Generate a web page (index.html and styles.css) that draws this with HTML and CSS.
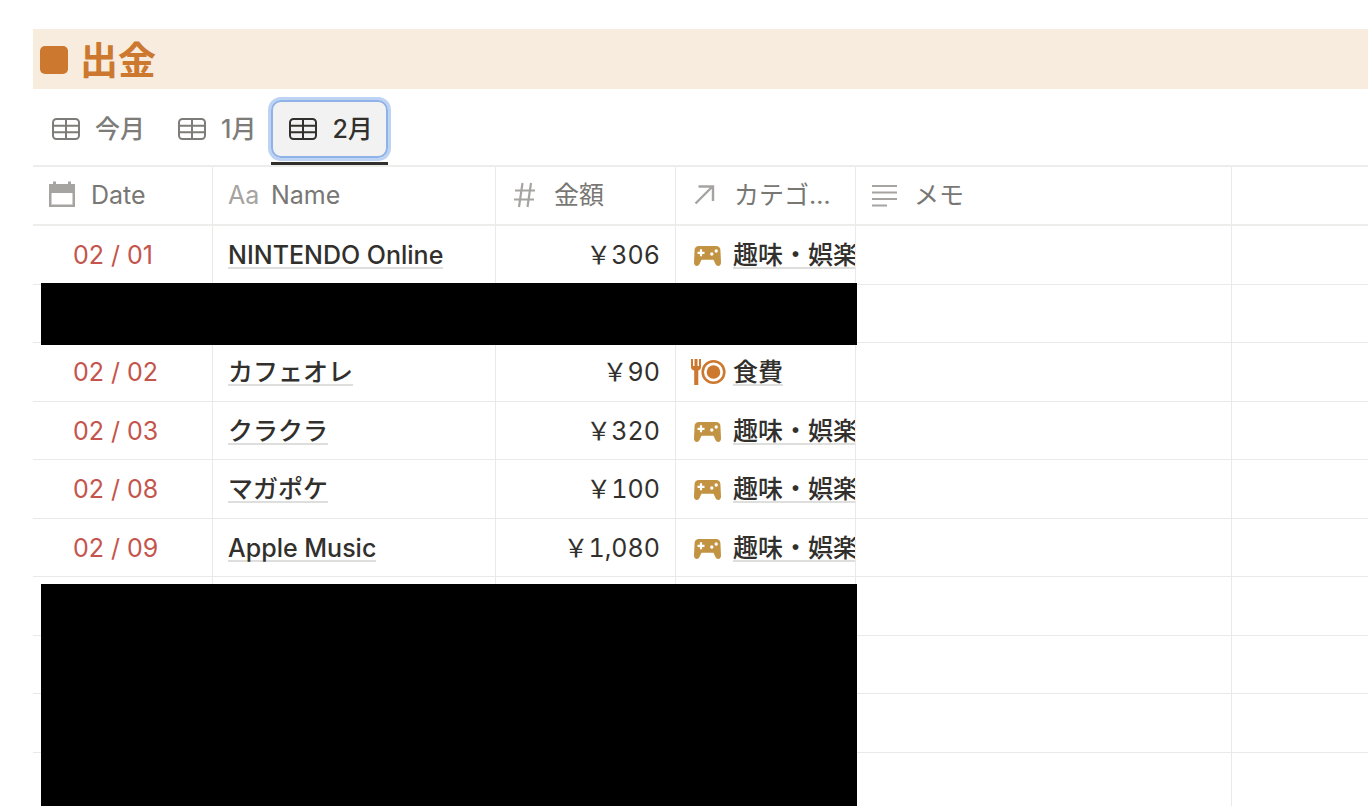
FILE: index.html
```html
<!DOCTYPE html>
<html lang="ja">
<head>
    <meta charset="UTF-8">
    <meta name="viewport" content="width=device-width, initial-scale=1.0">
    <title>出金</title>
    <link rel="stylesheet" href="styles.css">
</head>
<body>
  <!-- shared icons -->
  <svg class="sprite" aria-hidden="true">
    <symbol id="icon-table" viewBox="0 0 28 22">
      <rect x="1" y="1" width="26" height="20" rx="3.5" fill="none" stroke="currentColor" stroke-width="2"/>
      <path d="M1 7.7h26M1 14.3h26M14 1v20" fill="none" stroke="currentColor" stroke-width="2"/>
    </symbol>
    <symbol id="icon-game" viewBox="0 0 27 20">
      <path fill-rule="evenodd" d="M5 0h17c2.500 0 4.200 1.400 4.400 3.800l.6 12.400c.1 2.400-1 3.800-2.700 3.800-1.300 0-2.200-.7-2.800-2l-2-4.200h-12L5.500 18c-.6 1.300-1.500 2-2.800 2C1 20-.1 18.600 0 16.200L.6 3.800C.8 1.400 2.500 0 5 0zM5.900 3.300v2.400H3.500v2.200h2.400v2.400h2.200V7.900h2.400V5.700H8.100V3.300zM17.800 6.300a1.700 1.700 0 1 0 0 3.400 1.700 1.700 0 0 0 0-3.400zM22.200 3.300a1.700 1.700 0 1 0 0 3.400 1.700 1.700 0 0 0 0-3.400z" fill="currentColor"/>
    </symbol>
  </svg>

  <main class="database">
    <h1 class="title"><span class="title-mark"></span>出金</h1>

    <div class="tabs" role="tablist">
        <div class="tab-item">
            <button class="tab" role="tab" aria-selected="false"><svg class="tab-icon"><use href="#icon-table"/></svg>今月</button>
        </div>
        <div class="tab-item">
            <button class="tab" role="tab" aria-selected="false"><svg class="tab-icon"><use href="#icon-table"/></svg>1月</button>
        </div>
        <div class="tab-item active">
            <button class="tab" role="tab" aria-selected="true"><svg class="tab-icon"><use href="#icon-table"/></svg>2月</button>
        </div>
    </div>

    <div class="table-wrap">
      <table>
        <colgroup>
            <col class="col-date">
            <col class="col-name">
            <col class="col-amount">
            <col class="col-category">
            <col class="col-memo">
            <col>
        </colgroup>
        <thead>
          <tr>
            <th><div class="head">
                <svg class="head-icon" viewBox="0 0 28 28"><path fill-rule="evenodd" d="M1 3h4V.5h3V3h12V.5h3V3h4v23H1zM3.500 12v11.500h21V12z" fill="currentColor"/></svg>
                Date</div></th>
            <th><div class="head"><span class="head-aa">Aa</span>Name</div></th>
            <th><div class="head">
                <svg class="head-icon" viewBox="0 0 28 28"><path d="M11.500 2L8 26M20 2l-3.500 24M4 9.500h20M3 18.500h20" fill="none" stroke="currentColor" stroke-width="2.200"/></svg>
                金額</div></th>
            <th><div class="head">
                <svg class="head-icon" viewBox="0 0 28 28"><path d="M4.500 22.500L21.500 5.500M7.500 5.500H22v14.500" fill="none" stroke="currentColor" stroke-width="2.400"/></svg>
                <span class="head-label">カテゴリー</span></div></th>
            <th><div class="head">
                <svg class="head-icon" viewBox="0 0 28 28"><path d="M1 5h25M1 11.500h25M1 18h25M1 24.500h15" fill="none" stroke="currentColor" stroke-width="2"/></svg>
                メモ</div></th>
            <th></th>
          </tr>
        </thead>
        <tbody>
          <tr>
            <td class="date">02 / 01</td>
            <td><div class="name"><a class="page-link" href="#">NINTENDO Online</a></div></td>
            <td class="amount">￥306</td>
            <td><div class="category"><svg class="category-icon game"><use href="#icon-game"/></svg><a class="page-link" href="#">趣味・娯楽</a></div></td>
            <td></td>
            <td></td>
          </tr>
          <tr><td></td><td></td><td></td><td></td><td></td><td></td></tr>
          <tr>
            <td class="date">02 / 02</td>
            <td><div class="name"><a class="page-link" href="#">カフェオレ</a></div></td>
            <td class="amount">￥90</td>
            <td><div class="category">
                <svg class="category-icon food" viewBox="0 0 36 28"><path d="M0 1h2v7h1.500V1h3v7H8V1h2v8c0 1.800-.9 2.900-2.700 3.400V27H3.200V12.400C1 11.900 0 10.800 0 9z" fill="currentColor"/><circle cx="22.500" cy="14" r="10.800" fill="none" stroke="currentColor" stroke-width="2.600"/><circle cx="22.500" cy="14" r="6.800" fill="currentColor"/></svg><a class="page-link" href="#">食費</a></div></td>
            <td></td>
            <td></td>
          </tr>
          <tr>
            <td class="date">02 / 03</td>
            <td><div class="name"><a class="page-link" href="#">クラクラ</a></div></td>
            <td class="amount">￥320</td>
            <td><div class="category"><svg class="category-icon game"><use href="#icon-game"/></svg><a class="page-link" href="#">趣味・娯楽</a></div></td>
            <td></td>
            <td></td>
          </tr>
          <tr>
            <td class="date">02 / 08</td>
            <td><div class="name"><a class="page-link" href="#">マガポケ</a></div></td>
            <td class="amount">￥100</td>
            <td><div class="category"><svg class="category-icon game"><use href="#icon-game"/></svg><a class="page-link" href="#">趣味・娯楽</a></div></td>
            <td></td>
            <td></td>
          </tr>
          <tr>
            <td class="date">02 / 09</td>
            <td><div class="name"><a class="page-link" href="#">Apple Music</a></div></td>
            <td class="amount">￥1,080</td>
            <td><div class="category"><svg class="category-icon game"><use href="#icon-game"/></svg><a class="page-link" href="#">趣味・娯楽</a></div></td>
            <td></td>
            <td></td>
          </tr>
          <tr><td></td><td></td><td></td><td></td><td></td><td></td></tr>
          <tr><td></td><td></td><td></td><td></td><td></td><td></td></tr>
          <tr><td></td><td></td><td></td><td></td><td></td><td></td></tr>
          <tr><td></td><td></td><td></td><td></td><td></td><td></td></tr>
        </tbody>
      </table>
      <!-- private rows are covered -->
      <div class="cover cover-row"></div>
      <div class="cover cover-rest"></div>
    </div>
  </main>
</body>
</html>
```

FILE: styles.css
```css
* {
    box-sizing: border-box;
}
body {
    margin: 0;
    height: 100vh;
    overflow: hidden;
    background-color: #fff;
    color: #32302c;
    font-family: Inter, "Noto Sans CJK JP", sans-serif;
    font-size: 25px;
    line-height: 32px;
}
.sprite {
    position: absolute;
    width: 0;
    height: 0;
}
.database {
    display: flex;
    flex-direction: column;
    height: 100%;
    padding: 29px 0 0 33px;
}
.title {
    display: flex;
    flex-shrink: 0;
    align-items: center;
    gap: 12px;
    height: 60px;
    margin: 0;
    padding: 2px 7px 0;
    background-color: #f8ecdf;
    color: #cc782f;
    font-size: 38px;
    line-height: 58px;
    font-weight: 700;
}
.title-mark {
    width: 28px;
    height: 28px;
    border-radius: 5px;
    background-color: #cc782f;
}

/* view tabs */
.tabs {
    display: flex;
    flex-shrink: 0;
    padding-left: 1px;
    border-bottom: 2px solid #ededec;
}
.tab-item {
    padding: 11px 0 4px;
    border-bottom: 3px solid transparent;
}
.tab-item.active {
    border-bottom-color: #32302c;
}
.tab {
    display: flex;
    align-items: center;
    gap: 15px;
    height: 58px;
    padding: 0 15px 0 18px;
    border: 0;
    border-radius: 10px;
    background: none;
    color: #7d7c78;
    font: inherit;
    font-weight: 500;
}
.active .tab {
    background-color: #f2f2f2;
    color: #32302c;
    box-shadow: inset 0 0 0 2px #8fb2e8, 0 0 0 3px #bcd3f3;
}
.tab-icon {
    width: 28px;
    height: 22px;
}

/* table */
.table-wrap {
    position: relative;
    flex: 1;
    min-height: 0;
}
table {
    width: 100%;
    table-layout: fixed;
    border-spacing: 0;
}
.col-date, .col-amount, .col-category {
    width: 180px;
}
.col-name {
    width: 283px;
}
.col-memo {
    width: 376px;
}
th, td {
    height: 59px;
    padding: 0 15px;
    border-right: 1px solid #e9e9e7;
    border-bottom: 1px solid #e9e9e7;
    text-align: left;
    white-space: nowrap;
}
tbody tr:nth-child(even) td {
    height: 58px;
}
th {
    padding-bottom: 2px;
    border-bottom: 2px solid #ededec;
    color: #787774;
    font-weight: 400;
}
th:last-child, td:last-child {
    border-right: 0;
}
.head {
    display: flex;
    align-items: center;
    gap: 15px;
}
.head-icon, .head-aa {
    flex-shrink: 0;
    width: 28px;
    color: #a5a4a0;
}
.head-icon {
    height: 28px;
}
.head-label {
    overflow: hidden;
    text-overflow: ellipsis;
}
.date {
    padding-left: 40px;
    color: #c4554d;
}
.amount {
    text-align: right;
    font-variant-numeric: tabular-nums;
}
.page-link {
    display: block;
    height: 28px;
    border-bottom: 2px solid #dededd;
    color: inherit;
    font-weight: 500;
    line-height: 28px;
    text-decoration: none;
}
.name {
    display: flex;
}
.category {
    display: flex;
    align-items: center;
    margin-right: -15px;
    overflow: hidden;
}
.category-icon {
    flex-shrink: 0;
    color: #c29343;
}
.game {
    width: 27px;
    height: 20px;
    margin: 2px 12px 0 3px;
}
.food {
    width: 36px;
    height: 28px;
    margin-right: 6px;
    color: #cc782f;
}
.cover {
    position: absolute;
    left: 8px;
    width: 816px;
    background-color: #000;
}
.cover-row {
    top: 116px;
    height: 62px;
}
.cover-rest {
    top: 417px;
    bottom: 0;
}
```
